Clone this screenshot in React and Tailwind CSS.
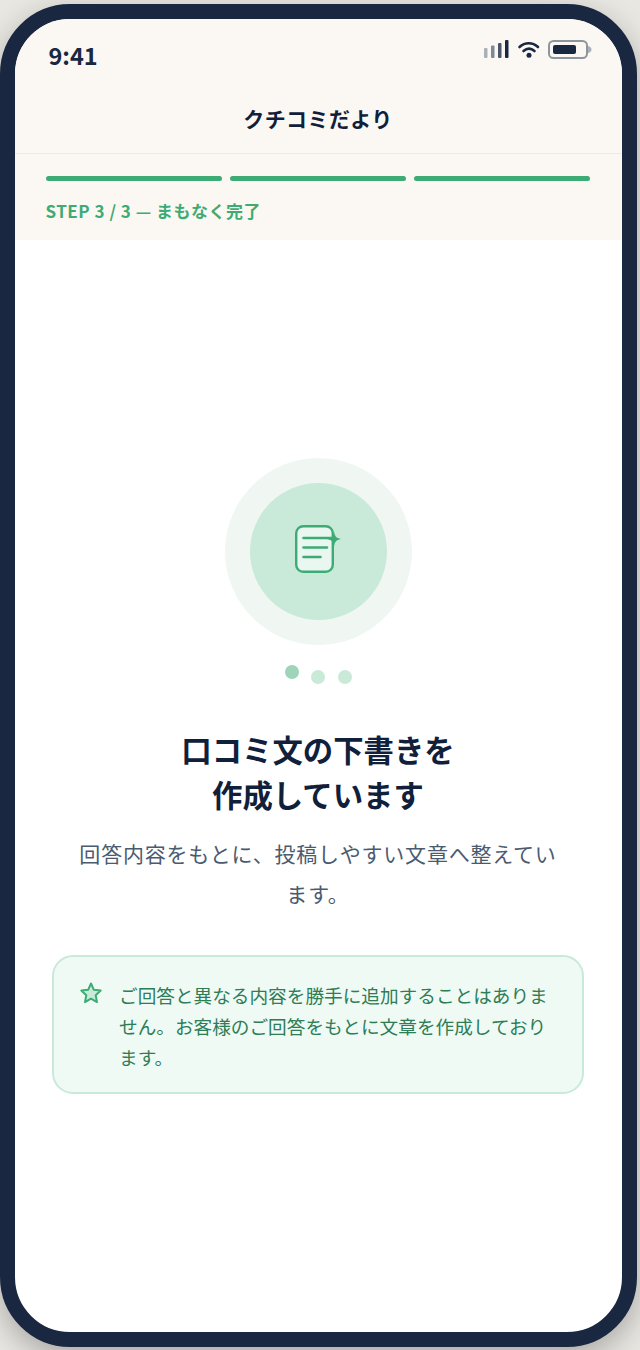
import React from "react";

function Status() {
  return (
    <svg width="108" height="22" viewBox="0 0 108 22" className="block">
      <rect x="0" y="8" width="3.500" height="10" rx="1" fill="#aab0b8" />
      <rect x="7" y="5.500" width="3.500" height="12.500" rx="1" fill="#7f8996" />
      <rect x="14" y="3" width="3.500" height="15" rx="1" fill="#4a5668" />
      <rect x="21" y="0" width="3.500" height="18" rx="1" fill="#1a2740" />
      <path d="M35.500 7C41 2 48.500 2 54 7" fill="none" stroke="#1a2740" strokeWidth="2.600" strokeLinecap="round" />
      <path d="M39.500 11C43 8 47 8 50.500 11" fill="none" stroke="#1a2740" strokeWidth="2.600" strokeLinecap="round" />
      <circle cx="45" cy="15.300" r="2.500" fill="#1a2740" />
      <rect x="65" y="1" width="38" height="17" rx="4.500" fill="none" stroke="#8d95a1" strokeWidth="2" />
      <rect x="69" y="5" width="23" height="9" rx="2" fill="#1a2740" />
      <path d="M104 6C106.500 6.500 107.500 8 107.500 9.500C107.500 11 106.500 12.500 104 13Z" fill="#aab0b8" />
    </svg>
  );
}

function DocIcon() {
  return (
    <svg width="48" height="54" viewBox="0 0 48 54" fill="none" className="block">
      <rect x="2.200" y="2.200" width="36.600" height="45.600" rx="7" fill="#eaf6f0" stroke="#3dac74" strokeWidth="2.400" />
      <path d="M9.500 14H38M9.500 23.500H33M9.500 33H26.500" stroke="#3dac74" strokeWidth="2.600" strokeLinecap="round" />
      <path d="M40 7.500C41 12.500 42 14 47 15C42 16 41 17.500 40 22.500C39 17.500 38 16 33 15C38 14 39 12.500 40 7.500Z" fill="#3dac74" />
    </svg>
  );
}

export default function App() {
  return (
    <div className="w-[640px] h-[1350px] overflow-hidden bg-[#e9e7e2] pt-[3.500px] font-['Noto_Sans_CJK_JP','Noto_Sans',sans-serif]">
      <div className="-ml-[0.5px] w-[637px] h-[1343px] rounded-[70px] border-[15px] border-[#1a2740] bg-white overflow-hidden flex flex-col shadow-[0_10px_30px_rgba(0,0,0,0.28)]">
        <div className="bg-[#fbf8f3] shrink-0">
          <div className="h-[135px] border-b border-[#efebe4] flex flex-col">
            <div className="flex justify-between h-[84px] pl-[34px] pr-[30px]">
              <span className="text-[23.500px] leading-[34px] mt-[19.500px] font-bold text-[#1a2740]">9:41</span>
              <div className="mt-[21px]"><Status /></div>
            </div>
            <div className="text-center text-[21px] tracking-[0.4px] leading-[30px] font-bold text-[#10203a]">クチコミだより</div>
          </div>
          <div className="px-[31px] pt-[22px] h-[86px]">
            <div className="flex gap-[8px]">
              <div className="h-[5px] flex-1 rounded-full bg-[#3fab74]" />
              <div className="h-[5px] flex-1 rounded-full bg-[#3fab74]" />
              <div className="h-[5px] flex-1 rounded-full bg-[#3fab74]" />
            </div>
            <div className="mt-[17px] text-[17px] leading-[26px] font-bold tracking-[0.5px] text-[#3fab74]">STEP 3 / 3 — まもなく完了</div>
          </div>
        </div>
        <div className="flex-1 flex flex-col items-center pt-[218px] px-[37px]">
          <div className="w-[187px] h-[187px] rounded-full bg-[#f0f7f3] flex items-center justify-center">
            <div className="w-[137px] h-[137px] rounded-full bg-[#c9e9d9] flex items-center justify-center">
              <DocIcon />
            </div>
          </div>
          <div className="flex gap-[12.500px] items-start mt-[20px] h-[20px]">
            <div className="w-[14px] h-[14px] rounded-full bg-[#9ed5ba]" />
            <div className="w-[14px] h-[14px] rounded-full bg-[#c9e9d9] mt-[5px]" />
            <div className="w-[14px] h-[14px] rounded-full bg-[#c9e9d9] mt-[5px]" />
          </div>
          <h1 className="mt-[42px] text-center text-[30.400px] leading-[45px] font-bold text-[#10203a]">口コミ文の下書きを<br />作成しています</h1>
          <p className="mt-[16px] text-center text-[21px] tracking-[0.8px] leading-[40px] text-[#4a5b70] w-[490px]">回答内容をもとに、投稿しやすい文章へ整えています。</p>
          <div className="mt-[42.500px] w-[532px] h-[139px] shrink-0 rounded-[21px] border-2 border-[#c9e9d9] bg-[#f0faf5] flex pl-[25px] pr-[24px] pt-[22px] gap-[16px]">
            <svg width="24" height="24" viewBox="0 0 24 24" className="shrink-0 mt-[2px]" fill="#c9e9d9" stroke="#3dac74" strokeWidth="2" strokeLinejoin="round">
              <path d="M12 2.500L14.900 8.800L21.700 9.600L16.700 14.300L18 21.100L12 17.700L6 21.100L7.300 14.300L2.300 9.600L9.100 8.800Z" />
            </svg>
            <p className="text-[18.650px] leading-[31px] text-[#2d7d56]">ご回答と異なる内容を勝手に追加することはありません。お客様のご回答をもとに文章を作成しております。</p>
          </div>
        </div>
      </div>
    </div>
  );
}
